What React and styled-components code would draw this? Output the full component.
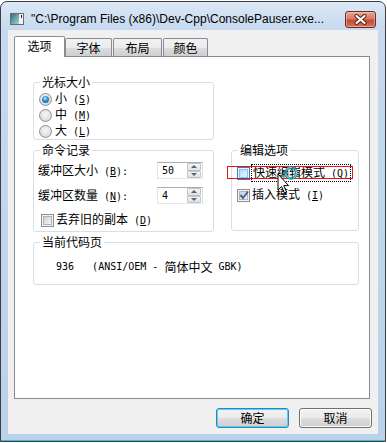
import React from 'react';
import styled, { createGlobalStyle } from 'styled-components';

const GlobalStyle = createGlobalStyle`
  html, body {
    margin: 0;
    padding: 0;
    background: #ffffff;
  }
  body {
    font-family: "Noto Sans CJK SC", "Liberation Sans", sans-serif;
    font-size: 12px;
    color: #000;
  }
`;

const Window = styled.div`
  margin-top: 1px;
  width: 386px;
  height: 441px;
  box-sizing: border-box;
  border: 1px solid #3a3f46;
  border-radius: 7px 7px 0 0;
  background: linear-gradient(#dbe8f6, #c6d9ef 28px, #bcd2ea);
  box-shadow: inset 0 -1px 0 #2fc3dc;
  display: flex;
  flex-direction: column;
`;

const TitleBar = styled.div`
  height: 28px;
  box-sizing: border-box;
  padding: 6px 9px 0 9px;
  display: flex;
  align-items: center;
`;

const TitleText = styled.div`
  margin-left: 7px;
  font-family: "Liberation Sans", sans-serif;
  font-size: 12px;
  white-space: nowrap;
  color: #000;
`;

const CloseButton = styled.div`
  margin-left: auto;
  width: 31px;
  height: 17px;
  box-sizing: border-box;
  border: 1px solid #6d2a22;
  border-radius: 3px;
  background: linear-gradient(#e8a493, #d77a64 45%, #c54b33 55%, #d1735a);
  box-shadow: inset 0 0 0 1px rgba(255, 220, 210, 0.45);
  display: flex;
  align-items: center;
  justify-content: center;
`;

const Client = styled.div`
  flex: 1;
  margin: 0 7px 7px 7px;
  background: #f0f0f0;
  padding: 6px 6px 6px 6px;
  display: flex;
  flex-direction: column;
`;

const TabStrip = styled.div`
  height: 20px;
  display: flex;
  align-items: flex-end;
`;

const Tab = styled.div`
  position: relative;
  z-index: ${p => (p.$active ? 2 : 0)};
  width: ${p => p.$w}px;
  height: ${p => (p.$active ? 21 : 18)}px;
  margin-bottom: ${p => (p.$active ? -1 : 0)}px;
  margin-left: ${p => p.$gap || 0}px;
  box-sizing: border-box;
  border: 1px solid #898c95;
  border-bottom: none;
  border-radius: 2px 2px 0 0;
  background: ${p => (p.$active ? '#ffffff' : 'linear-gradient(#f2f2f2, #ebebeb 50%, #dddddd 50%, #cfcfcf)')};
  display: flex;
  align-items: center;
  justify-content: center;
  padding-bottom: ${p => (p.$active ? 3 : 0)}px;
  line-height: 14px;
`;

const Panel = styled.div`
  position: relative;
  z-index: 1;
  width: 356px;
  height: 343px;
  box-sizing: border-box;
  border: 1px solid #898c95;
  background: #ffffff;
  padding: 18px 0 0 18px;
  display: grid;
  grid-template-columns: 181px 128px;
  grid-template-rows: 65px 89px 50px;
  grid-template-areas:
    "cursor ."
    "buffer edit"
    "code code";
  column-gap: 17px;
  row-gap: 3px;
  align-content: start;
`;

const Group = styled.fieldset`
  grid-area: ${p => p.$area};
  margin: 0;
  min-width: 0;
  height: ${p => p.$h}px;
  box-sizing: border-box;
  border: 1px solid #d5dfe5;
  border-radius: 3px;
  padding: ${p => p.$pt}px 0 0 ${p => p.$pl}px;
  display: flex;
  flex-direction: column;
  gap: ${p => p.$gap || 0}px;
`;

const Legend = styled.legend`
  padding: 0 2px;
  margin-left: ${p => p.$ml || 0}px;
  font-size: 12px;
  line-height: 14px;
`;

const Lat = styled.span`
  font-family: "DejaVu Sans Mono", "Liberation Mono", monospace;
  font-size: 10px;
  white-space: pre;
`;

const OptionRow = styled.div`
  height: 16px;
  display: flex;
  align-items: center;
  gap: ${p => p.$gap || 3}px;
  margin-left: ${p => p.$indent || 0}px;
  line-height: 14px;
  white-space: nowrap;
`;

const RadioCircle = styled.span`
  width: 13px;
  height: 13px;
  flex: none;
  border-radius: 50%;
  box-sizing: border-box;
  border: 1px solid #8e8f8f;
  background: radial-gradient(circle at 50% 40%, #f7f7f7 0, #e3e3e3 55%, #c9c9c9 100%);
  display: flex;
  align-items: center;
  justify-content: center;

  &::after {
    content: '';
    width: 7px;
    height: 7px;
    border-radius: 50%;
    background: ${p => (p.$checked
      ? 'radial-gradient(circle at 45% 35%, #b8ecff 0, #2a8ad4 45%, #0d4f8f 100%)'
      : 'transparent')};
  }
`;

const CheckBox = styled.span`
  width: 13px;
  height: 13px;
  flex: none;
  box-sizing: border-box;
  border: 1px solid ${p => (p.$hover ? '#3c7fb1' : '#8f8f8f')};
  background: #f4f4f4;
  padding: 1px;
  display: flex;

  &::before {
    content: '';
    flex: 1;
    border: 1px solid ${p => (p.$hover ? '#79c6f9' : '#aeb3b9')};
    background: ${p => (p.$hover
      ? 'linear-gradient(135deg, #b1dffd, #e9f7fe)'
      : 'linear-gradient(135deg, #cbcfd5, #f6f6f6)')};
  }
`;

const CheckWrap = styled.span`
  position: relative;
  display: flex;
  flex: none;
`;

const CheckMark = styled.svg`
  position: absolute;
  left: 1px;
  top: 0px;
`;

const FocusText = styled.span`
  outline: 1px dotted #000;
  outline-offset: 0;
  padding: 0 1px;
`;

const FieldRow = styled.div`
  height: 17px;
  display: flex;
  align-items: center;
  justify-content: space-between;
  padding-right: 10px;
  line-height: 14px;
  white-space: nowrap;
`;

const SpinBox = styled.div`
  width: 46px;
  height: 17px;
  box-sizing: border-box;
  border: 1px solid #abadb3;
  border-color: #abadb3 #dbdfe6 #e3e9ef #e2e3ea;
  background: #fff;
  display: flex;
  align-items: center;
  padding-left: 4px;
`;

const SpinButtons = styled.div`
  margin-left: auto;
  margin-right: 1px;
  width: 14px;
  height: 15px;
  display: flex;
  flex-direction: column;
`;

const SpinHalf = styled.div`
  flex: 1;
  box-sizing: border-box;
  border: 1px solid #c3c3c3;
  border-radius: 1px;
  background: linear-gradient(#f6f6f6, #e1e1e1);
  display: flex;
  align-items: center;
  justify-content: center;

  &::after {
    content: '';
    border-left: 3px solid transparent;
    border-right: 3px solid transparent;
    ${p => (p.$down ? 'border-top: 3px solid #4d6185;' : 'border-bottom: 3px solid #4d6185;')}
  }
`;

const CodeLine = styled.div`
  height: 16px;
  display: flex;
  align-items: center;
  line-height: 14px;
  white-space: pre;
`;

const Annotation = styled.div`
  position: absolute;
  left: 212px;
  top: 109px;
  width: 126px;
  height: 13px;
  box-sizing: border-box;
  border: 1px solid #ee1111;
  pointer-events: none;
`;

const Cursor = styled.svg`
  position: absolute;
  left: 255px;
  top: 103px;
  pointer-events: none;
`;

const ButtonRow = styled.div`
  margin-top: auto;
  display: flex;
  justify-content: flex-end;
  gap: 10px;
`;

const Button = styled.div`
  width: 73px;
  height: 20px;
  box-sizing: border-box;
  border: 1px solid ${p => (p.$default ? '#3c7fb1' : '#707070')};
  border-radius: 3px;
  background: linear-gradient(#f2f2f2, #ebebeb 50%, #dddddd 50%, #cfcfcf);
  box-shadow: inset 0 0 0 1px ${p => (p.$default ? '#4ed4fb' : '#fcfcfc')};
  display: flex;
  align-items: center;
  justify-content: center;
  line-height: 14px;
`;

const AppIcon = () => (
  <svg width="14" height="12" viewBox="0 0 14 12">
    <defs>
      <linearGradient id="ico" x1="0" y1="0" x2="1" y2="1">
        <stop offset="0" stopColor="#2d6e7e" />
        <stop offset="1" stopColor="#a9d6d9" />
      </linearGradient>
    </defs>
    <rect x="0.5" y="0.5" width="13" height="11" fill="#f4f4f4" stroke="#6b6b6b" />
    <rect x="1" y="1" width="8" height="10" fill="url(#ico)" />
    <rect x="11" y="2" width="1" height="3" fill="#222" />
  </svg>
);

const CloseGlyph = () => (
  <svg width="13" height="11" viewBox="0 0 13 11">
    <path d="M2.5 2 L10.5 9 M10.5 2 L2.5 9" stroke="#5a1d16" strokeWidth="4" strokeLinecap="round" />
    <path d="M2.5 2 L10.5 9 M10.5 2 L2.5 9" stroke="#ffffff" strokeWidth="2.2" strokeLinecap="round" />
  </svg>
);

const Radio = ({ checked, children }) => (
  <OptionRow>
    <RadioCircle $checked={checked} />
    <span>{children}</span>
  </OptionRow>
);

const Check = ({ checked, hover, indent, children }) => (
  <OptionRow $indent={indent} $gap={2}>
    <CheckWrap>
      <CheckBox $hover={hover} />
      {checked && (
        <CheckMark width="12" height="12" viewBox="0 0 12 12">
          <path d="M2.5 6 L5 9 L10 2.5" fill="none" stroke="#4a5f97" strokeWidth="2" />
        </CheckMark>
      )}
    </CheckWrap>
    {children}
  </OptionRow>
);

const Spinner = ({ value }) => (
  <SpinBox>
    <Lat>{value}</Lat>
    <SpinButtons>
      <SpinHalf />
      <SpinHalf $down />
    </SpinButtons>
  </SpinBox>
);

const App = () => (
  <>
    <GlobalStyle />
    <Window>
      <TitleBar>
        <AppIcon />
        <TitleText>"C:\Program Files (x86)\Dev-Cpp\ConsolePauser.exe...</TitleText>
        <CloseButton>
          <CloseGlyph />
        </CloseButton>
      </TitleBar>
      <Client>
        <TabStrip>
          <Tab $active $w={51}>选项</Tab>
          <Tab $w={47}>字体</Tab>
          <Tab $w={49} $gap={1}>布局</Tab>
          <Tab $w={45} $gap={1}>颜色</Tab>
        </TabStrip>
        <Panel>
          <Group $area="cursor" $h={65} $pt={2} $pl={5}>
            <Legend $ml={1}>光标大小</Legend>
            <Radio checked>小<Lat> (<u>S</u>)</Lat></Radio>
            <Radio>中<Lat> (<u>M</u>)</Lat></Radio>
            <Radio>大<Lat> (<u>L</u>)</Lat></Radio>
          </Group>
          <Group $area="buffer" $h={89} $pt={5} $pl={4} $gap={8}>
            <Legend $ml={2}>命令记录</Legend>
            <FieldRow>
              <span>缓冲区大小<Lat> (<u>B</u>):</Lat></span>
              <Spinner value="50" />
            </FieldRow>
            <FieldRow>
              <span>缓冲区数量<Lat> (<u>N</u>):</Lat></span>
              <Spinner value="4" />
            </FieldRow>
            <Check indent={3}>
              <span>丢弃旧的副本<Lat> (<u>D</u>)</Lat></span>
            </Check>
          </Group>
          <Group $area="edit" $h={88} $pt={8} $pl={5} $gap={6}>
            <Legend $ml={1}>编辑选项</Legend>
            <Check hover>
              <FocusText>快速编辑模式<Lat> (<u>Q</u>)</Lat></FocusText>
            </Check>
            <Check checked>
              <span>插入模式<Lat> (<u>I</u>)</Lat></span>
            </Check>
          </Group>
          <Group $area="code" $h={50} $pt={10} $pl={22}>
            <Legend $ml={-16}>当前代码页</Legend>
            <CodeLine>
              <Lat>936   (ANSI/OEM - </Lat>简体中文<Lat> GBK)</Lat>
            </CodeLine>
          </Group>
          <Annotation />
          <Cursor width="35" height="35" viewBox="0 0 35 35">
            <circle cx="21" cy="13" r="5.5" fill="none" stroke="#1c8f98" strokeWidth="2.6" />
            <circle cx="21" cy="13" r="5.5" fill="none" stroke="#8be3e6" strokeWidth="1" strokeDasharray="6 4" />
            <path d="M8 14 L8 30 L11.5 26.5 L14.5 33 L16.5 32 L13.8 25.6 L18.6 25.6 Z" fill="#ffffff" stroke="#000" strokeWidth="1" strokeLinejoin="round" />
          </Cursor>
        </Panel>
        <ButtonRow>
          <Button $default>确定</Button>
          <Button>取消</Button>
        </ButtonRow>
      </Client>
    </Window>
  </>
);

export default App;
